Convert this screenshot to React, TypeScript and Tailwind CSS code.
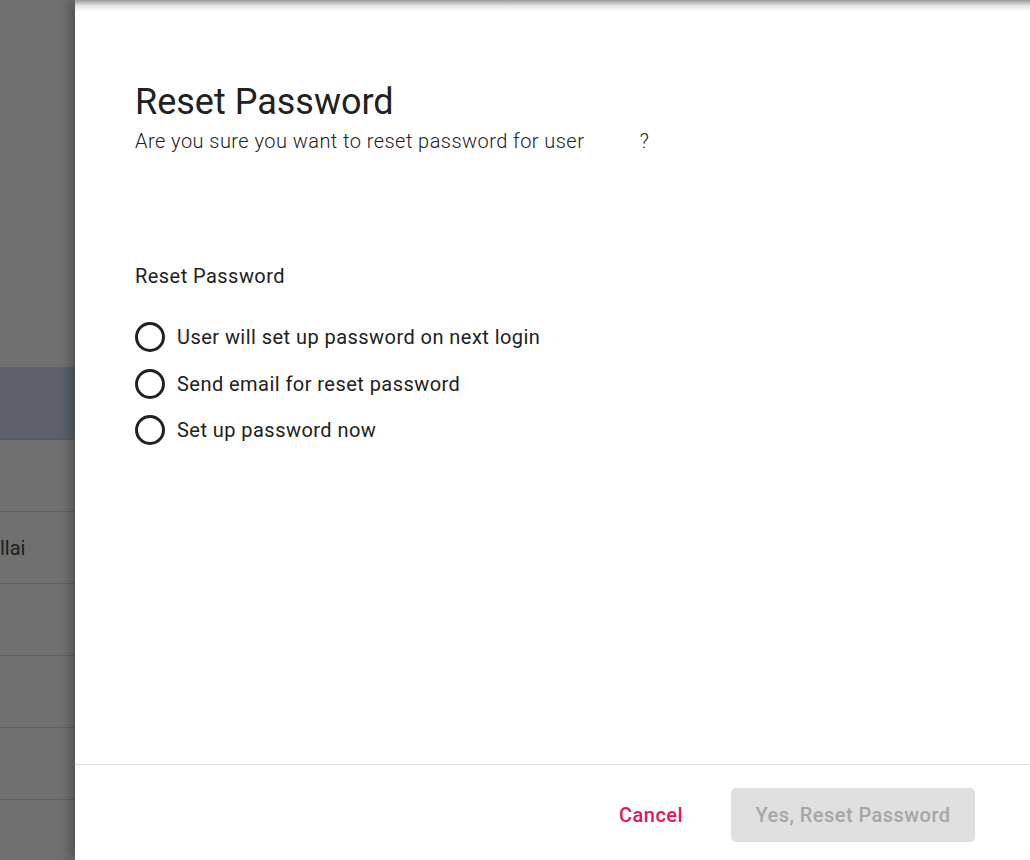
import React from 'react'

const rows = ['', '', 'llai', '', '', '', '']

function BackgroundList() {
  return (
    <div className="w-[75px] shrink-0 h-full bg-[#707070] overflow-hidden">
      <div className="h-[368px] border-b border-[#636363]" />
      <div className="h-[72px] bg-[#5b626b] border-b border-[#5a5a5a]" />
      {rows.slice(1).map((r, i) => (
        <div
          key={i}
          className="h-[72px] border-b border-[#626262] flex items-center text-[20px] text-[#1e1e1e] whitespace-nowrap"
        >
          {r}
        </div>
      ))}
    </div>
  )
}

function Radio({ label }: { label: string }) {
  return (
    <label className="flex items-center h-[46.5px] gap-3 cursor-pointer">
      <span className="w-[30px] h-[30px] rounded-full border-[3px] border-[#212121] shrink-0" />
      <span className="text-[20px] tracking-[0.45px] text-[#212121] leading-none">{label}</span>
    </label>
  )
}

export default function App() {
  return (
    <div
      className="flex w-full h-[860px] overflow-hidden bg-white"
      style={{ fontFamily: 'Roboto, "Liberation Sans", sans-serif' }}
    >
      <BackgroundList />
      <div className="relative flex-1 h-full flex flex-col bg-white shadow-[-6px_0_10px_rgba(0,0,0,0.25)]">
        <div className="absolute inset-x-0 top-0 h-[12px] bg-gradient-to-b from-[#9a9a9a] via-[#e6e6e6] to-white" />
        <div className="flex-1 pl-[60px] pt-[80px]">
          <h1 className="text-[36px] leading-[44px] text-[#212121] font-normal">Reset Password</h1>
          <p className="text-[20px] leading-[30px] tracking-[0.45px] font-light text-[#212121] mt-[2px]">
            Are you sure you want to reset password for user
            <span className="inline-block w-[50px]" /> ?
          </p>
          <div className="mt-[105px] text-[20px] leading-[30px] tracking-[0.45px] text-[#212121]">
            Reset Password
          </div>
          <div className="mt-[23px] flex flex-col">
            <Radio label="User will set up password on next login" />
            <Radio label="Send email for reset password" />
            <Radio label="Set up password now" />
          </div>
        </div>
        <div className="h-[96px] border-t border-[#e0e0e0] flex items-center justify-end pr-[55px] pt-[5px] gap-[48px]">
          <button className="text-[20px] tracking-[0.45px] font-medium text-[#e0185b]">Cancel</button>
          <button
            disabled
            className="w-[244px] h-[54px] rounded-[5px] bg-[#e0e0e0] text-[20px] tracking-[0.45px] font-medium text-[#a6a6a6]"
          >
            Yes, Reset Password
          </button>
        </div>
      </div>
    </div>
  )
}
